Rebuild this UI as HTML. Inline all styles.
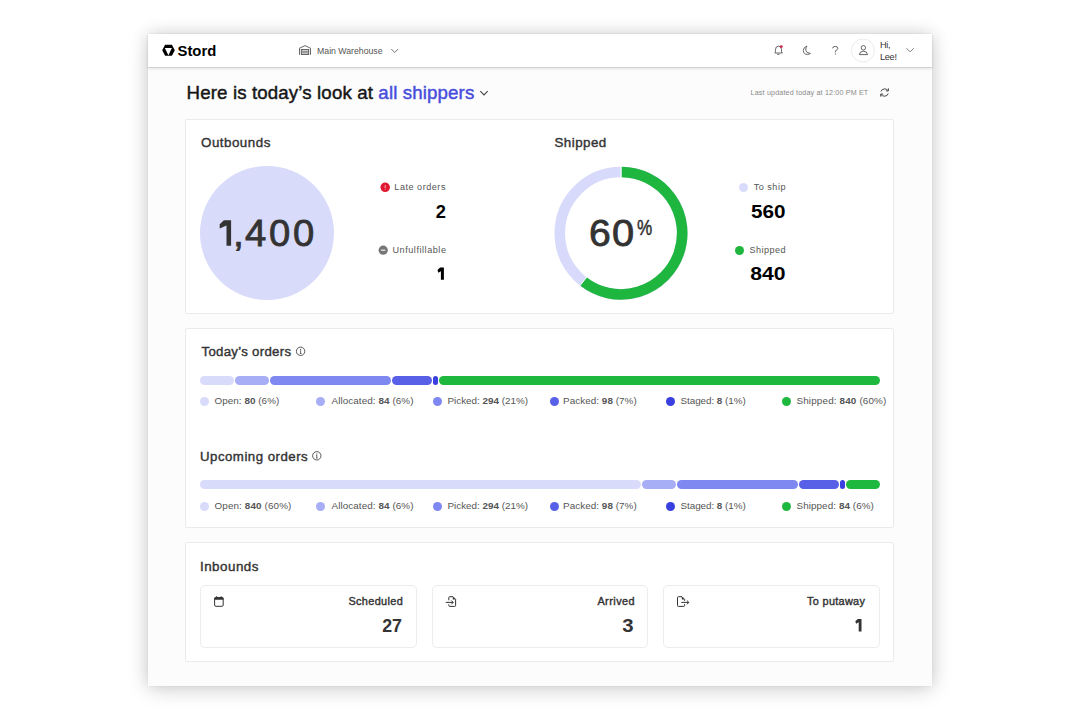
<!DOCTYPE html>
<html><head><meta charset="utf-8">
<style>
*{margin:0;padding:0;box-sizing:border-box}
html,body{width:1080px;height:720px;overflow:hidden;background:#fff}
body{position:relative;font-family:"Liberation Sans",sans-serif;color:#333}
.a{position:absolute;white-space:nowrap;line-height:1}
.frame{position:absolute;left:148px;top:34px;width:784px;height:652px;background:#fcfcfc;box-shadow:0 0 1px rgba(0,0,0,0.10),0 0 16px rgba(0,0,0,0.15),0 5px 22px rgba(0,0,0,0.10)}
.hdr{position:absolute;left:148px;top:34px;width:784px;height:34px;background:#fff;border-bottom:1px solid #d2d2d2;box-shadow:0 1px 3px rgba(0,0,0,0.10)}
.card{position:absolute;left:185px;width:709px;background:#fff;border:1px solid #ebebeb;border-radius:2px}
.sub{position:absolute;top:585px;width:216.5px;height:63px;background:#fff;border:1px solid #ececec;border-radius:5px}
.seg{position:absolute;height:9px;border-radius:5px}
.dot{position:absolute;width:9px;height:9px;border-radius:50%}
.t{font-weight:bold;color:#333}
.big{top:215.1px;font-size:37px;color:#333;-webkit-text-stroke:0.8px #333;transform-origin:0 0}
.lg{font-size:10px;color:#555}
.lg b{color:#333}
</style></head><body>
<div class="frame"></div>
<div class="hdr"></div>

<!-- logo -->
<svg class="a" style="left:160px;top:42px" width="18" height="16" viewBox="160 42 18 16">
<path fill="#000" fill-rule="evenodd" d="M165.1 44.7 L171.9 44.7 L174.8 50.25 L171.9 55.8 L165.1 55.8 L162.2 50.25 Z M164.8 48 L171.9 48 L168.4 55.2 Z"/>
</svg>
<div class="a" id="stord" style="left:177.50px;top:43.65px;font-size:14.83px;color:#000;font-weight:bold;">Stord</div>

<!-- warehouse -->
<svg class="a" style="left:297px;top:43px" width="16" height="14" viewBox="297 43 16 14">
<g fill="none" stroke="#555" stroke-width="0.9">
<path d="M299.5 54.8 V48.2 L305 45.6 L310.5 48.2 V54.8"/>
<rect x="301.3" y="49.5" width="7.4" height="5"/>
<path d="M301.3 51.2 H308.7 M301.3 52.9 H308.7"/>
</g></svg>
<div class="a" id="wh" style="left:317.10px;top:46.62px;font-size:8.72px;color:#555;letter-spacing:-0.014px;">Main Warehouse</div>
<svg class="a" style="left:390px;top:47px" width="10" height="7" viewBox="390 47 10 7">
<path d="M391.3 49 L394.7 52.5 L398.1 49" fill="none" stroke="#666" stroke-width="0.9"/>
</svg>

<!-- right icons -->
<svg class="a" style="left:770px;top:42px" width="20" height="16" viewBox="770 42 20 16">
<g fill="none" stroke="#555" stroke-width="0.9">
<path d="M774.9 53 H782.4 L781.5 51.8 V49.3 Q781.3 46.2 778.3 46.1 Q775.7 46.2 775.6 49.2 L775.4 51.6 Z"/>
<path d="M777.3 54.4 H779.4"/>
</g>
<circle cx="781.3" cy="46.6" r="1.45" fill="#d22648"/>
</svg>
<svg class="a" style="left:800px;top:43px" width="14" height="14" viewBox="800 43 14 14">
<path d="M807 46 Q803.2 47.5 803.3 50.5 Q803.6 54.6 807.5 54.4 Q809.5 54.3 810.4 53.4 Q806.2 53.3 805.8 50.2 Q805.6 47.6 807 46 Z" fill="none" stroke="#555" stroke-width="0.9"/>
</svg>
<svg class="a" style="left:829px;top:43px" width="12" height="14" viewBox="829 43 12 14">
<path d="M832.6 48.3 Q832.6 46.4 835.2 46.4 Q837.8 46.4 837.8 48.4 Q837.8 49.8 835.4 50.9 V52.3" fill="none" stroke="#555" stroke-width="0.9"/>
<circle cx="835.4" cy="53.9" r="0.55" fill="#555"/>
</svg>
<svg class="a" style="left:850px;top:38px" width="26" height="26" viewBox="850 38 26 26">
<circle cx="862.9" cy="50.5" r="11.5" fill="#fff" stroke="#e6e6e6" stroke-width="0.8"/>
<g fill="none" stroke="#555" stroke-width="0.9">
<circle cx="863.4" cy="47.8" r="2.2"/>
<path d="M859.3 54.6 Q859.8 51.2 863.4 51.2 Q867 51.2 867.6 54.6 Z"/>
</g></svg>
<div class="a" id="hi" style="left:880.00px;top:40.65px;font-size:9.16px;color:#333;letter-spacing:-0.360px;">Hi,</div>
<div class="a" id="lee" style="left:880.00px;top:53.45px;font-size:9.16px;color:#333;letter-spacing:-0.300px;">Lee!</div>
<svg class="a" style="left:904px;top:46px" width="12" height="8" viewBox="904 46 12 8">
<path d="M906.4 48.2 L910.1 51.9 L913.8 48.2" fill="none" stroke="#777" stroke-width="0.9"/>
</svg>

<!-- heading -->
<div class="a" id="heading" style="left:186.60px;top:83.89px;font-size:18.68px;color:#161616;letter-spacing:0.134px;-webkit-text-stroke-width:0.45px;">Here is today’s look at <span style="color:#474ddc">all shippers</span></div>
<svg class="a" style="left:478px;top:88px" width="12" height="9" viewBox="478 88 12 9">
<path d="M480.3 91.2 L484 94.9 L487.7 91.2" fill="none" stroke="#444" stroke-width="1.1"/>
</svg>
<div class="a" id="upd" style="left:750.60px;top:89.77px;font-size:7.12px;color:#8a8a8a;letter-spacing:0.180px;">Last updated today at 12:00 PM ET</div>
<svg class="a" style="left:878px;top:86px" width="13" height="13" viewBox="878 86 13 13">
<g fill="none" stroke="#444" stroke-width="1">
<path d="M881 91.5 Q881.6 89 884.5 88.9 Q886.8 88.9 888 90.6"/>
<path d="M888.2 93.5 Q887.6 96.1 884.6 96.2 Q882.2 96.2 881 94.5"/>
<path d="M888.4 88.4 V90.9 H885.9"/>
<path d="M880.7 96.6 V94.1 H883.2"/>
</g></svg>

<!-- card 1 -->
<div class="card" style="top:119px;height:195px"></div>
<div class="a" id="outb" style="left:201.00px;top:135.68px;font-size:13.37px;color:#333;letter-spacing:0.495px;-webkit-text-stroke-width:0.4px;">Outbounds</div>
<div class="a" style="left:200px;top:166px;width:134px;height:134px;border-radius:50%;background:#d9dbfb"></div>
<svg class="a" style="left:218px;top:219px" width="15" height="28" viewBox="218 219 15 28"><path fill="#333" d="M223.9 220.2 H231.1 V245.8 H226.5 V225.4 L219.7 228.5 V224.2 Z"/></svg>
<div class="a big" style="left:232.95px;transform:scaleX(1.061)">,</div>
<div class="a big" style="left:245.39px;transform:scaleX(1.033)">4</div>
<div class="a big" style="left:268.87px;transform:scaleX(1.033)">0</div>
<div class="a big" style="left:292.97px;transform:scaleX(1.033)">0</div>

<svg class="a" style="left:379px;top:182px" width="12" height="12" viewBox="379 182 12 12">
<circle cx="385.2" cy="187.3" r="4.75" fill="#e01a32"/>
<path d="M385.2 185.1 V188.3" stroke="#ffd6da" stroke-width="0.8"/>
<circle cx="385.2" cy="189.6" r="0.45" fill="#ffd6da"/>
</svg>
<div class="a" id="late" style="right:634.02px;top:183.16px;font-size:9.08px;color:#555;letter-spacing:0.522px;">Late orders</div>
<div class="a" id="n2" style="right:634.00px;top:203.79px;font-size:17.73px;color:#000;font-weight:bold;transform:scaleX(1.0302);transform-origin:100% 0;">2</div>
<svg class="a" style="left:377px;top:245px" width="12" height="12" viewBox="377 245 12 12">
<circle cx="383.2" cy="250.2" r="4.6" fill="#777"/>
<path d="M381.1 250.2 H385.3" stroke="#fff" stroke-width="1.1"/>
</svg>
<div class="a" id="unf" style="right:633.54px;top:246.31px;font-size:9.08px;color:#555;letter-spacing:0.540px;">Unfulfillable</div>
<svg class="a" style="left:436px;top:266px" width="10" height="15" viewBox="436 266 10 15"><path fill="#000" d="M440.1 267.5 H443.9 V279.8 H440.9 V271.3 L438.3 272.7 L437.5 270.1 Z"/></svg>

<div class="a" id="shipT" style="left:554.50px;top:135.68px;font-size:13.37px;color:#333;letter-spacing:0.450px;-webkit-text-stroke-width:0.4px;">Shipped</div>
<svg class="a" style="left:550px;top:162px" width="142" height="142" viewBox="550 162 142 142">
<circle cx="621" cy="233.2" r="61.2" fill="none" stroke="#d8dafb" stroke-width="10.6"/>
<path d="M621.5 172 A61.2 61.2 0 1 1 583.3 281.4" fill="none" stroke="#1fb63f" stroke-width="10.6"/>
<path d="M621 166 V178.5" stroke="#fff" stroke-width="1"/>
<path d="M579.9 285.8 L586.8 277" stroke="#fff" stroke-width="1"/>
</svg>
<div class="a big" style="left:588.78px;transform:scaleX(1.058)">6</div>
<div class="a big" style="left:611.93px;transform:scaleX(1.076)">0</div>
<div class="a" style="left:636.6px;top:217.1px;font-size:22px;color:#333;transform:scaleX(0.778);transform-origin:0 0;-webkit-text-stroke:0.5px #333">%</div>

<div class="dot" style="left:739px;top:183.1px;background:#d9dbfb"></div>
<div class="a" id="toship" style="right:294.01px;top:183.16px;font-size:9.08px;color:#555;letter-spacing:0.510px;">To ship</div>
<div class="a" id="n560" style="right:294.50px;top:203.79px;font-size:17.73px;color:#000;font-weight:bold;transform:scaleX(1.1666);transform-origin:100% 0;">560</div>
<div class="dot" style="left:735.1px;top:245.7px;background:#1fb53f"></div>
<div class="a" id="shipL" style="right:293.95px;top:246.31px;font-size:9.08px;color:#555;letter-spacing:0.450px;">Shipped</div>
<div class="a" id="n840" style="right:294.50px;top:266.39px;font-size:17.73px;color:#000;font-weight:bold;transform:scaleX(1.1943);transform-origin:100% 0;">840</div>

<!-- card 2 -->
<div class="card" style="top:328px;height:200px"></div>
<div class="a" id="today" style="left:201.50px;top:345.10px;font-size:13.23px;color:#333;letter-spacing:0.291px;-webkit-text-stroke-width:0.4px;">Today’s orders</div>
<svg class="a" style="left:295px;top:346px" width="12" height="12" viewBox="295 346 12 12">
<circle cx="300.6" cy="351.3" r="4.2" fill="none" stroke="#444" stroke-width="0.9"/>
<path d="M300.6 350.6 V353.5 M299.8 353.5 H301.5 M299.9 350.8 H300.6" stroke="#444" stroke-width="0.8" fill="none"/>
<circle cx="300.6" cy="349.3" r="0.6" fill="#444"/>
</svg>
<div class="seg" style="top:376px;left:200px;width:34.4px;background:#d9dbfb"></div>
<div class="seg" style="top:376px;left:234.8px;width:34.4px;background:#a8aef6"></div>
<div class="seg" style="top:376px;left:269.8px;width:121.4px;background:#7f88f1"></div>
<div class="seg" style="top:376px;left:391.8px;width:40.3px;background:#5960e8"></div>
<div class="seg" style="top:376px;left:432.7px;width:5.4px;background:#3a40e0"></div>
<div class="seg" style="top:376px;left:438.6px;width:441.4px;background:#1fb83f"></div>

<div class="dot" style="left:200.1px;top:397px;background:#d9dbfb"></div>
<div class="a" id="l1" style="left:214.50px;top:396.03px;font-size:9.88px;color:#555;letter-spacing:0.045px;">Open: <b>80</b> (6%)</div>
<div class="dot" style="left:316.4px;top:397px;background:#a8aef6"></div>
<div class="a" id="l2" style="left:331.50px;top:396.03px;font-size:9.88px;color:#555;letter-spacing:0.074px;">Allocated: <b>84</b> (6%)</div>
<div class="dot" style="left:433.1px;top:397px;background:#7f88f1"></div>
<div class="a" id="l3" style="left:447.50px;top:396.03px;font-size:9.88px;color:#555;letter-spacing:-0.011px;">Picked: <b>294</b> (21%)</div>
<div class="dot" style="left:549.6px;top:397px;background:#5960e8"></div>
<div class="a" id="l4" style="left:563.00px;top:396.03px;font-size:9.88px;color:#555;letter-spacing:0.051px;">Packed: <b>98</b> (7%)</div>
<div class="dot" style="left:665.9px;top:397px;background:#3a40e0"></div>
<div class="a" id="l5" style="left:680.50px;top:396.03px;font-size:9.88px;color:#555;letter-spacing:-0.055px;">Staged: <b>8</b> (1%)</div>
<div class="dot" style="left:781.9px;top:397px;background:#1fb83f"></div>
<div class="a" id="l6" style="left:796.50px;top:396.03px;font-size:9.88px;color:#555;letter-spacing:0.148px;">Shipped: <b>840</b> (60%)</div>

<div class="a" id="upc" style="left:200.00px;top:449.50px;font-size:13.23px;color:#333;letter-spacing:0.501px;-webkit-text-stroke-width:0.4px;">Upcoming orders</div>
<svg class="a" style="left:311px;top:450px" width="12" height="12" viewBox="311 450 12 12">
<circle cx="316.8" cy="455.8" r="4.2" fill="none" stroke="#444" stroke-width="0.9"/>
<path d="M316.8 455.1 V458 M316 458 H317.7 M316.1 455.3 H316.8" stroke="#444" stroke-width="0.8" fill="none"/>
<circle cx="316.8" cy="453.8" r="0.6" fill="#444"/>
</svg>
<div class="seg" style="top:480px;left:200px;width:440.8px;background:#d9dbfb"></div>
<div class="seg" style="top:480px;left:641.6px;width:34.6px;background:#a8aef6"></div>
<div class="seg" style="top:480px;left:676.9px;width:121.1px;background:#7f88f1"></div>
<div class="seg" style="top:480px;left:798.8px;width:40.2px;background:#5960e8"></div>
<div class="seg" style="top:480px;left:839.7px;width:5.3px;background:#3a40e0"></div>
<div class="seg" style="top:480px;left:845.7px;width:34.3px;background:#1fb83f"></div>

<div class="dot" style="left:200.1px;top:501.8px;background:#d9dbfb"></div>
<div class="a" id="u1" style="left:214.50px;top:500.53px;font-size:9.88px;color:#555;letter-spacing:0.116px;">Open: <b>840</b> (60%)</div>
<div class="dot" style="left:316.4px;top:501.8px;background:#a8aef6"></div>
<div class="a" id="u2" style="left:331.50px;top:500.53px;font-size:9.88px;color:#555;letter-spacing:0.074px;">Allocated: <b>84</b> (6%)</div>
<div class="dot" style="left:433.1px;top:501.8px;background:#7f88f1"></div>
<div class="a" id="u3" style="left:447.50px;top:500.53px;font-size:9.88px;color:#555;letter-spacing:-0.011px;">Picked: <b>294</b> (21%)</div>
<div class="dot" style="left:549.6px;top:501.8px;background:#5960e8"></div>
<div class="a" id="u4" style="left:563.00px;top:500.53px;font-size:9.88px;color:#555;letter-spacing:0.051px;">Packed: <b>98</b> (7%)</div>
<div class="dot" style="left:665.9px;top:501.8px;background:#3a40e0"></div>
<div class="a" id="u5" style="left:680.50px;top:500.53px;font-size:9.88px;color:#555;letter-spacing:-0.055px;">Staged: <b>8</b> (1%)</div>
<div class="dot" style="left:781.9px;top:501.8px;background:#1fb83f"></div>
<div class="a" id="u6" style="left:796.50px;top:500.53px;font-size:9.88px;color:#555;letter-spacing:0.072px;">Shipped: <b>84</b> (6%)</div>

<!-- card 3 -->
<div class="card" style="top:542px;height:120px"></div>
<div class="a" id="inb" style="left:200.00px;top:560.28px;font-size:13.37px;color:#333;letter-spacing:0.489px;-webkit-text-stroke-width:0.4px;">Inbounds</div>
<div class="sub" style="left:200px"></div>
<div class="sub" style="left:431.5px"></div>
<div class="sub" style="left:663px"></div>

<svg class="a" style="left:212px;top:594px" width="14" height="15" viewBox="212 594 14 15">
<g fill="none" stroke="#333" stroke-width="1">
<rect x="214.6" y="597.7" width="8.6" height="8.6" rx="1.3"/>
<path d="M216.7 596.2 V598 M221.1 596.2 V598"/>
</g><rect x="214.3" y="597.3" width="9.2" height="2.4" rx="0.8" fill="#333"/></svg>
<div class="a" id="sched" style="right:676.86px;top:595.77px;font-size:10.90px;color:#333;letter-spacing:0.360px;-webkit-text-stroke-width:0.4px;">Scheduled</div>
<div class="a" id="n27" style="right:677.50px;top:616.91px;font-size:18.90px;color:#333;font-weight:bold;transform:scaleX(0.9419);transform-origin:100% 0;">27</div>

<svg class="a" style="left:444px;top:594px" width="14" height="15" viewBox="444 594 14 15">
<g fill="none" stroke="#333" stroke-width="1">
<path d="M448.8 600.3 V597.6 Q448.8 596.7 449.7 596.7 H453 L455.6 599.3 V605.5 Q455.6 606.4 454.7 606.4 H449.7 Q448.8 606.4 448.8 605.5 V604.3"/>
<path d="M445.8 602.4 H453.2 M451.3 600.5 L453.2 602.4 L451.3 604.3"/>
</g><path d="M452.8 596.7 L455.6 599.5 H452.8 Z" fill="#333"/></svg>
<div class="a" id="arr" style="right:444.95px;top:595.77px;font-size:10.90px;color:#333;letter-spacing:0.450px;-webkit-text-stroke-width:0.4px;">Arrived</div>
<div class="a" id="n3" style="right:446.00px;top:616.91px;font-size:18.90px;color:#333;font-weight:bold;transform:scaleX(1.0752);transform-origin:100% 0;">3</div>

<svg class="a" style="left:675px;top:594px" width="16" height="15" viewBox="675 594 16 15">
<g fill="none" stroke="#333" stroke-width="1">
<path d="M684.6 600.8 V599.3 L682 596.7 H678.4 Q677.5 596.7 677.5 597.6 V605.5 Q677.5 606.4 678.4 606.4 H683.7 Q684.6 606.4 684.6 605.5 V604.1"/>
<path d="M681.3 602.4 H688.8 M686.9 600.5 L688.8 602.4 L686.9 604.3"/>
</g><path d="M681.8 596.7 L684.6 599.5 H681.8 Z" fill="#333"/></svg>
<div class="a" id="put" style="right:214.80px;top:595.77px;font-size:10.90px;color:#333;letter-spacing:0.300px;-webkit-text-stroke-width:0.4px;">To putaway</div>
<svg class="a" style="left:854px;top:617px" width="10" height="16" viewBox="854 617 10 16"><path fill="#333" d="M857.8 619 H861.5 V631.6 H858.7 V622.3 L856.1 623.7 L855.3 621.2 Z"/></svg>

</body></html>
